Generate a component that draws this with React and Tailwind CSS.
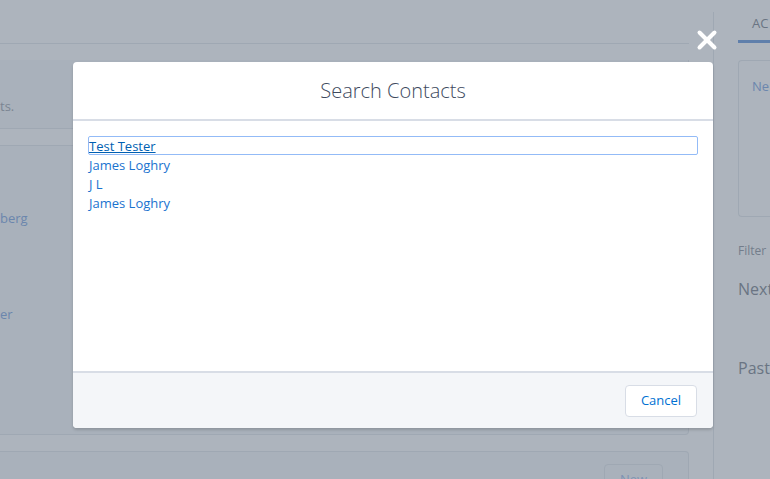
import { X } from 'lucide-react'

const contacts = ['Test Tester', 'James Loghry', 'J L', 'James Loghry']

export default function App() {
  return (
    <div className="relative h-[479px] w-[770px] overflow-hidden bg-[#adb4bd] text-[13px]" style={{ fontFamily: '"Open Sans", "Noto Sans", sans-serif' }}>
      {/* page behind the backdrop, already dimmed */}
      <div className="flex h-full">
        <div className="w-[689px] shrink-0">
          <div className="h-[44px] border-b border-[#9fa8b3]" />
          <div className="mt-[16px] h-[69px] rounded-br border-b border-r border-[#9fa8b3] bg-[#a9b1bb] pt-[37px] text-[#7b8592]">
            <span>ts.</span>
          </div>
          <div className="mt-[16px] h-[290px] rounded-r border border-l-0 border-[#9fa8b3] bg-[#a9b1bb] text-[#6b86ad]">
            <p className="mt-[63px]">berg</p>
            <p className="mt-[76px]">er</p>
          </div>
          <div className="mt-[16px] flex h-[60px] justify-end rounded-tr border border-l-0 border-[#9fa8b3] bg-[#a9b1bb] pr-[25px] pt-[12px]">
            <span className="h-[32px] w-[59px] rounded border border-[#9fa8b3] pt-[5px] text-center text-[#7f93b3]">New</span>
          </div>
        </div>
        <div className="ml-[24px] mt-[12px] flex flex-1 flex-col border-l border-[#9fa8b3] pl-[24px]">
          <div className="h-[31px] border-b-[3px] border-[#5f7fab] pl-[14px] pt-[2px] text-[#6a7483]">AC</div>
          <div className="mt-[17px] h-[157px] rounded-l border border-r-0 border-[#9fa8b3] pl-[13px] pt-[16px] text-[#6b86ad]">Ne</div>
          <div className="mt-[25px] text-[12px] text-[#737d8b]">Filter</div>
          <div className="mt-[17px] text-[16px] text-[#6a7483]">Next</div>
          <div className="mt-[55px] text-[16px] text-[#6a7483]">Past</div>
        </div>
      </div>

      {/* modal */}
      <div className="absolute inset-0">
        <div className="relative ml-[73px] mt-[62px] w-[640px]">
          <button className="absolute -right-[9px] -top-[37px] text-white">
            <X size={30} strokeWidth={3.2} />
          </button>
          <div className="overflow-hidden rounded bg-white shadow-[0_2px_3px_rgba(0,0,0,0.16)]">
            <header className="flex h-[59px] items-center justify-center border-b-2 border-[#d8dde6] pt-[1px]">
              <h2 className="text-[20px] font-light text-[#3e4a5e]">Search Contacts</h2>
            </header>
            <div className="h-[250px] px-[15px] pt-[15px]">
              {contacts.map((name, i) => (
                <div
                  key={i}
                  className={`h-[19px] rounded-[2px] leading-[18px] ${i === 0 ? 'border border-[#93bbf7] text-[#005fb2] underline' : 'border border-transparent text-[#1a73cf]'}`}
                >
                  {name}
                </div>
              ))}
            </div>
            <footer className="flex h-[57px] items-center justify-end border-t-2 border-[#d8dde6] bg-[#f4f6f9] pr-[16px]">
              <button className="mt-[1px] h-[32px] w-[72px] rounded border border-[#d8dde6] bg-white text-[13px] text-[#0070d2]">Cancel</button>
            </footer>
          </div>
        </div>
      </div>
    </div>
  )
}
